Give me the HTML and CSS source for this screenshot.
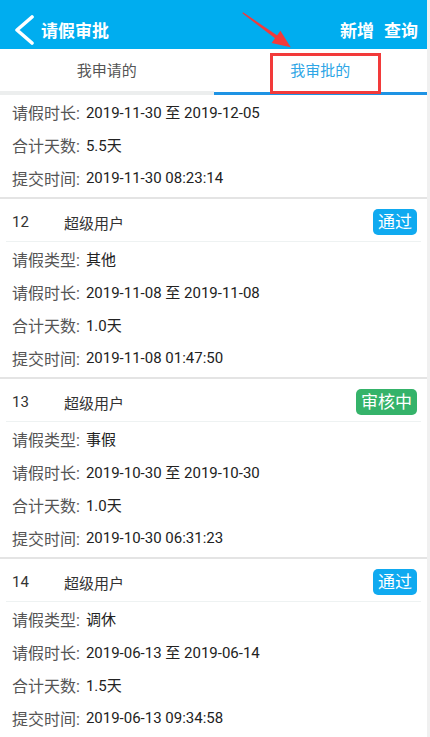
FILE: index.html
```html
<!DOCTYPE html>
<html lang="zh-CN">
<head>
    <meta charset="UTF-8">
    <meta name="viewport" content="width=device-width, initial-scale=1.0">

    <!-- Title -->
    <title>请假审批</title>

    <!-- CSS styles -->
    <link rel="stylesheet" href="styles.css">
</head>
<body>
    <div class="app">
        <!-- Top bar -->
        <header class="topbar">
            <div class="topbar-left">
                <svg class="back" width="24" height="30" viewBox="0 0 24 30">
                    <polyline points="19,2 4,15 19,28" fill="none" stroke="#fff" stroke-width="3.6" stroke-linecap="round" stroke-linejoin="round"/>
                </svg>
                <span class="title">请假审批</span>
            </div>
            <div class="actions">
                <span>新增</span>
                <span>查询</span>
            </div>
        </header>

        <!-- Tabs -->
        <nav class="tabs">
            <div class="tab">我申请的</div>
            <div class="tab active">我审批的</div>
        </nav>

        <!-- List of requests -->
        <div class="list">
            <div class="card">
                <div class="row"><span class="label">请假时长:</span><span class="value">2019-11-30 至 2019-12-05</span></div>
                <div class="row"><span class="label">合计天数:</span><span class="value">5.5天</span></div>
                <div class="row"><span class="label">提交时间:</span><span class="value">2019-11-30 08:23:14</span></div>
            </div>

            <div class="card">
                <div class="card-head">
                    <span class="num">12</span>
                    <span class="user">超级用户</span>
                    <span class="badge pass">通过</span>
                </div>
                <div class="row"><span class="label">请假类型:</span><span class="value">其他</span></div>
                <div class="row"><span class="label">请假时长:</span><span class="value">2019-11-08 至 2019-11-08</span></div>
                <div class="row"><span class="label">合计天数:</span><span class="value">1.0天</span></div>
                <div class="row"><span class="label">提交时间:</span><span class="value">2019-11-08 01:47:50</span></div>
            </div>

            <div class="card">
                <div class="card-head">
                    <span class="num">13</span>
                    <span class="user">超级用户</span>
                    <span class="badge pending">审核中</span>
                </div>
                <div class="row"><span class="label">请假类型:</span><span class="value">事假</span></div>
                <div class="row"><span class="label">请假时长:</span><span class="value">2019-10-30 至 2019-10-30</span></div>
                <div class="row"><span class="label">合计天数:</span><span class="value">1.0天</span></div>
                <div class="row"><span class="label">提交时间:</span><span class="value">2019-10-30 06:31:23</span></div>
            </div>

            <div class="card">
                <div class="card-head">
                    <span class="num">14</span>
                    <span class="user">超级用户</span>
                    <span class="badge pass">通过</span>
                </div>
                <div class="row"><span class="label">请假类型:</span><span class="value">调休</span></div>
                <div class="row"><span class="label">请假时长:</span><span class="value">2019-06-13 至 2019-06-14</span></div>
                <div class="row"><span class="label">合计天数:</span><span class="value">1.5天</span></div>
                <div class="row"><span class="label">提交时间:</span><span class="value">2019-06-13 09:34:58</span></div>
            </div>
        </div>

        <!-- Annotation: red arrow and box over the active tab -->
        <svg class="arrow" width="300" height="50" viewBox="0 0 300 50">
            <polygon points="242.3,13.2 243.1,12.2 278,36.1 276,39.1" fill="#f23a3a"/>
            <polygon points="290.7,47.3 280.4,30.7 271.6,42.9" fill="#f23a3a"/>
        </svg>
        <div class="mark"></div>
    </div>
</body>
</html>
```

FILE: styles.css
```css
body {
    margin: 0;
    padding: 0;
    background-color: #f0f0f0;
    font-family: Roboto, "Noto Sans CJK SC", sans-serif;
}

.app {
    position: relative;
    width: 427px;
    height: 737px;
    overflow: hidden;
    background-color: #fff;
}

/* top bar */
.topbar {
    display: flex;
    justify-content: space-between;
    align-items: center;
    height: 49px;
    box-sizing: border-box;
    padding: 10px 9px 0 13px;
    background-color: #00adef;
    color: #fff;
    font-weight: bold;
    font-size: 17px;
}

.topbar-left {
    display: flex;
    align-items: center;
    gap: 4px;
}

.back {
    display: block;
}

.actions {
    display: flex;
    gap: 10px;
}

/* tabs */
.tabs {
    display: flex;
    height: 46px;
}

.tab {
    flex: 1;
    display: flex;
    align-items: center;
    justify-content: center;
    padding-bottom: 1px;
    font-size: 15px;
    color: #555;
    border-bottom: 4px solid #eceeee;
}

.tab.active {
    color: #2ea6e6;
    border-bottom: 3px solid #1e93e4;
    padding-bottom: 2px;
}

/* cards */
.card {
    padding: 0 6px 3px;
    border-bottom: 2px solid #e4e4e4;
}

.card-head {
    display: flex;
    align-items: center;
    padding: 10px 4px 6px 6px;
    border-bottom: 1px solid #eef2f2;
    font-size: 15px;
    color: #333;
}

.num {
    width: 52px;
}

.user {
    flex: 1;
}

.badge {
    height: 26px;
    line-height: 26px;
    padding: 0 5px;
    border-radius: 5px;
    color: #fff;
    font-size: 17px;
}

.badge.pass {
    background-color: #10aaf0;
}

.badge.pending {
    background-color: #35b36a;
}

.row {
    display: flex;
    align-items: center;
    height: 33px;
    padding-left: 6px;
}

.label {
    font-size: 16px;
    color: #555;
}

.value {
    margin-left: 6px;
    font-size: 15px;
    color: #222;
}

/* annotation */
.arrow {
    position: absolute;
    left: 0;
    top: 0;
}

.mark {
    position: absolute;
    left: 270px;
    top: 53px;
    width: 105px;
    height: 35px;
    border: 3px solid #f23a3a;
}
```
